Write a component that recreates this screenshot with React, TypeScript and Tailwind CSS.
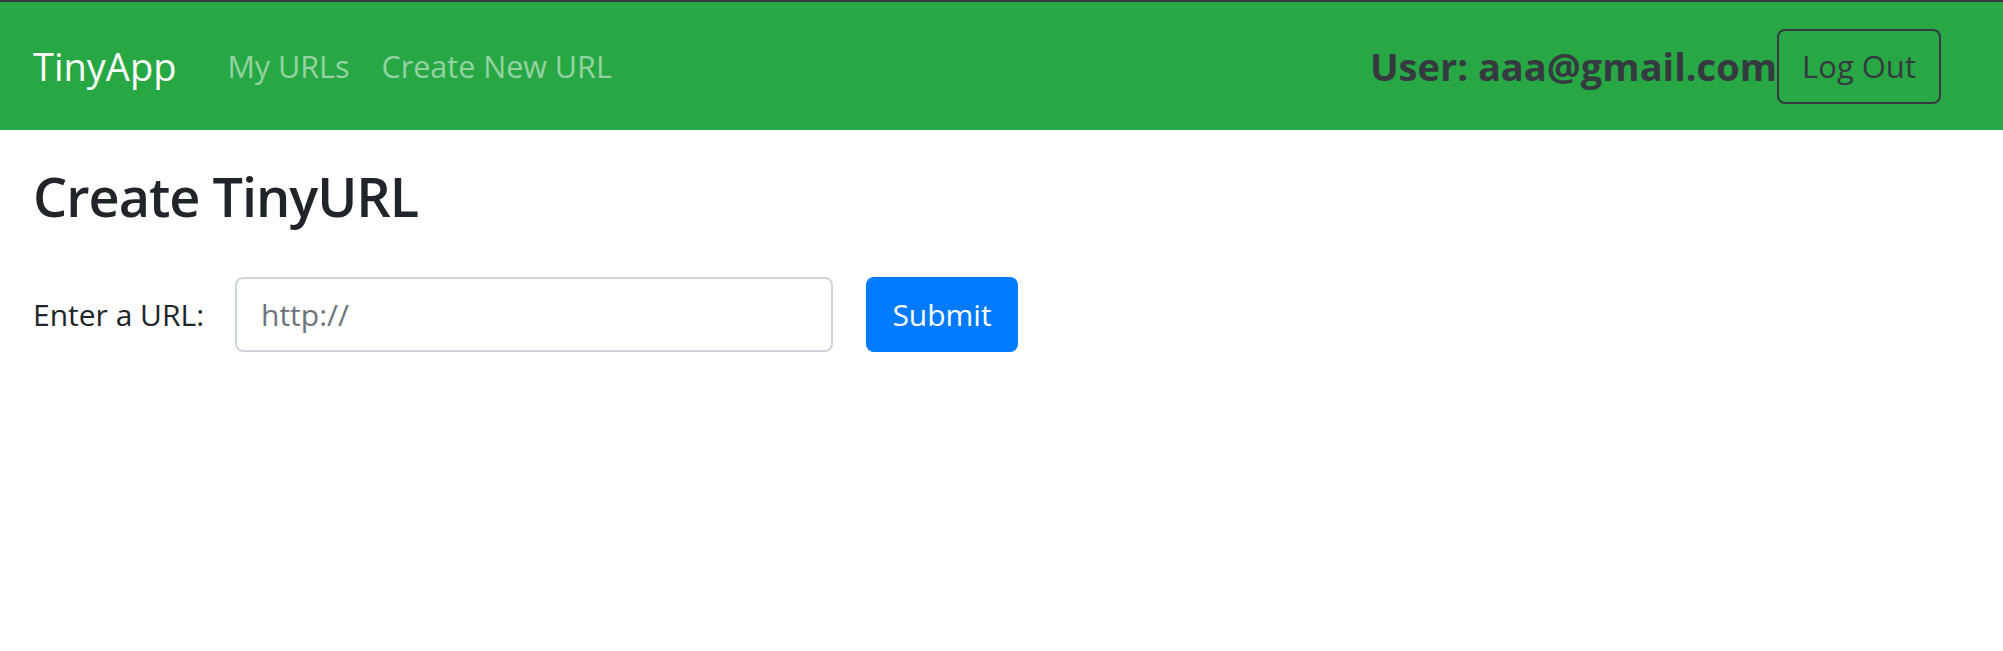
export default function App() {
  return (
    <div className="min-h-screen bg-white font-['Open_Sans',sans-serif] text-[#212529]">
      <nav className="flex h-[130px] items-center border-t-2 border-[#343a40] bg-[#28a745] pl-[33px] pr-[62px]">
        <a href="#" className="text-[38px] leading-none text-white">
          TinyApp
        </a>
        <a href="#" className="ml-[51px] text-[30.5px] leading-none text-white/50">
          My URLs
        </a>
        <a href="#" className="ml-[32px] text-[30.5px] leading-none text-white/50">
          Create New URL
        </a>
        <span className="ml-auto text-[38px] font-bold leading-none text-[#343a40]">
          User: aaa@gmail.com
        </span>
        <button className="flex h-[75px] w-[164px] items-center justify-center rounded-[8px] border-2 border-[#343a40] text-[31px] text-[#343a40]">
          Log Out
        </button>
      </nav>

      <main className="px-[33px]">
        <h1 className="mt-[33px] text-[54px] font-semibold leading-[67px] tracking-[-1px]">
          Create TinyURL
        </h1>
        <form className="mt-[47px] flex items-center">
          <label htmlFor="longURL" className="w-[202px] text-[30px]">
            Enter a URL:
          </label>
          <input
            id="longURL"
            type="text"
            placeholder="http://"
            className="h-[75px] w-[598px] rounded-[8px] border-2 border-[#ced4da] px-[24px] text-[30px] placeholder:text-[#6c757d] focus:outline-none"
          />
          <button
            type="submit"
            className="ml-[33px] h-[75px] w-[152px] rounded-[8px] bg-[#007bff] text-[30px] text-white"
          >
            Submit
          </button>
        </form>
      </main>
    </div>
  )
}
